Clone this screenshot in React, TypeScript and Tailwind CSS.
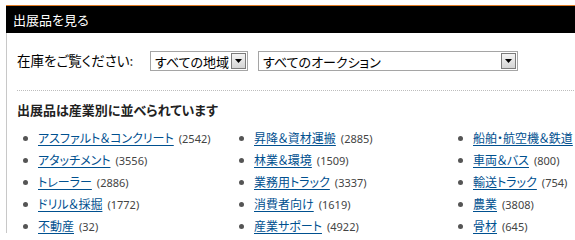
import React from "react"

const jp = "font-['Noto_Sans_CJK_JP','Noto_Sans',sans-serif] [font-feature-settings:'palt']"

const columns: { name: string; count: number }[][] = [
    [
        { name: "アスファルト＆コンクリート", count: 2542 },
        { name: "アタッチメント", count: 3556 },
        { name: "トレーラー", count: 2886 },
        { name: "ドリル＆採掘", count: 1772 },
        { name: "不動産", count: 32 }
    ],
    [
        { name: "昇降＆資材運搬", count: 2885 },
        { name: "林業＆環境", count: 1509 },
        { name: "業務用トラック", count: 3337 },
        { name: "消費者向け", count: 1619 },
        { name: "産業サポート", count: 4922 }
    ],
    [
        { name: "船舶・航空機＆鉄道", count: 0 },
        { name: "車両＆バス", count: 800 },
        { name: "輸送トラック", count: 754 },
        { name: "農業", count: 3808 },
        { name: "骨材", count: 645 }
    ]
]

const FakeSelect = ({ label, width }: { label: string; width: string }) => (
    <div
        className={`${width} h-[20px] flex items-center justify-between border border-[#a5a5a5] bg-white pl-[4px] pr-[1px]`}
    >
        <span className="text-[13px] leading-none text-black">{label}</span>
        <span className="w-[15px] h-[16px] flex items-center justify-center border border-[#7b7b7b] bg-gradient-to-b from-[#f4f4f4] to-[#d4d4d4]">
            <svg width="7" height="4" viewBox="0 0 7 4">
                <path d="M0 0h7L3.5 4z" fill="#000" />
            </svg>
        </span>
    </div>
)

const App = () => {
    return (
        <div className={`w-[575px] h-[235px] overflow-hidden bg-white pt-[5px] pl-[6px] ${jp}`}>
            <div className="w-[600px]">
                <div className="border-t border-[#e07b24] bg-black h-[28px] flex items-center pl-[7px]">
                    <h1 className="text-white text-[13px] leading-none">出展品を見る</h1>
                </div>
                <div className="border-l border-[#c8c8c8] pl-[10px] pt-[18px] h-[200px]">
                    <div className="flex items-center">
                        <span className="text-[13.5px] text-black w-[133px] leading-none">
                            在庫をご覧ください<span className="text-[#333]">:</span>
                        </span>
                        <FakeSelect label="すべての地域" width="w-[98px]" />
                        <div className="w-[10px]" />
                        <FakeSelect label="すべてのオークション" width="w-[260px]" />
                    </div>
                    <div className="mt-[19px] border-t border-dotted border-[#bdbdbd]" />
                    <h2 className="mt-[11px] text-[13px] leading-[16px] font-bold text-[#222]">
                        出展品は産業別に並べられています
                    </h2>
                    <div className="mt-[9px] pl-[6px] grid grid-cols-[216px_219px_1fr]">
                        {columns.map((col, i) => (
                            <ul key={i} className="flex flex-col">
                                {col.map((item) => (
                                    <li key={item.name} className="h-[22px] flex items-center">
                                        <span className="w-[5px] h-[5px] rounded-full bg-[#555] mr-[10px] shrink-0" />
                                        <a
                                            href="#"
                                            className="text-[12px] leading-none text-[#00508f] underline underline-offset-2 whitespace-nowrap"
                                        >
                                            {item.name}
                                        </a>
                                        {item.count > 0 && (
                                            <span className="ml-[5px] text-[11px] leading-none text-[#444] font-['Noto_Sans',sans-serif]">
                                                ({item.count})
                                            </span>
                                        )}
                                    </li>
                                ))}
                            </ul>
                        ))}
                    </div>
                </div>
            </div>
        </div>
    )
}

export default App
